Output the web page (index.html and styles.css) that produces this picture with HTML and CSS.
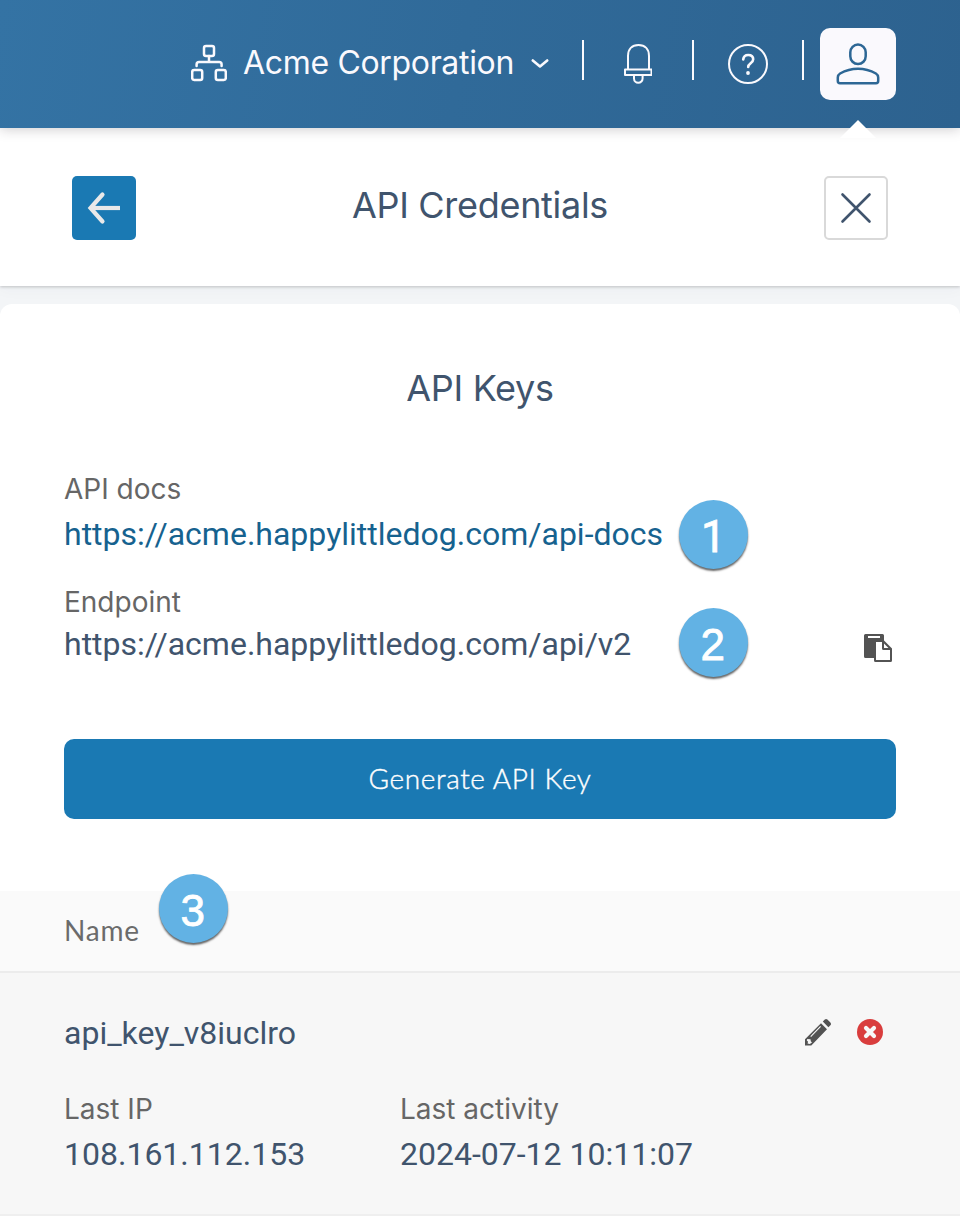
FILE: index.html
```html
<!DOCTYPE html>
<html lang="en">
<head>
<meta charset="utf-8">
<title>API Credentials</title>
<link rel="stylesheet" href="styles.css">
</head>
<body>
<header class="topbar">
  <div class="org">
    <svg class="org-icon" width="36" height="38" viewBox="0 0 36 38" fill="none" stroke="currentColor" stroke-width="2.5" stroke-linecap="round" stroke-linejoin="round">
      <rect x="13" y="2" width="10" height="10" rx="2"/>
      <rect x="1.2" y="26" width="10" height="10" rx="2"/>
      <rect x="24.8" y="26" width="10" height="10" rx="2"/>
      <path d="M18 12v6M5.600 22v-1.500q0-2.500 2.500-2.500h20q2.500 0 2.500 2.500V22"/>
    </svg>
    <span class="org-name">Acme Corporation</span>
    <svg class="chevron" width="18" height="12" viewBox="0 0 18 12" fill="none" stroke="currentColor" stroke-width="2.6" stroke-linecap="round" stroke-linejoin="round"><path d="M1.800 2.500 9 8.500l7.200-6"/></svg>
  </div>
  <span class="divider"></span>
  <span class="tool">
    <svg width="28" height="42" viewBox="0 0 28 42" fill="none" stroke="currentColor" stroke-width="2" stroke-linejoin="round">
      <path d="M4 27V14C4 7 8 3 14.500 3S25 7 25 14v13M1 27.500h26.500v5.500H1zM10 33v3.500a4.300 4.300 0 0 0 8.600 0V33"/>
    </svg>
  </span>
  <span class="divider"></span>
  <span class="tool">
    <svg width="40" height="42" viewBox="0 0 40 42" fill="none" stroke="currentColor" stroke-linecap="round" stroke-linejoin="round">
      <circle cx="20" cy="22" r="19" stroke-width="2"/>
      <path stroke-width="2.600" d="M15.200 17.500q.5-4.500 5-4.500 5 0 5 4.300c0 4-5 4-5 7.700"/>
      <circle cx="20" cy="31" r="1.900" fill="currentColor" stroke="none"/>
    </svg>
  </span>
  <span class="divider"></span>
  <span class="user">
    <svg width="44" height="44" viewBox="0 0 44 44" fill="none" stroke="currentColor" stroke-width="2.500" stroke-linejoin="round">
      <rect x="14.300" y="2.600" width="15.400" height="19.400" rx="7.700"/>
      <path d="M4 41.200h36q2.200 0 2.200-2.200v-3.500q0-2.500-2.300-4C34 28.200 28 26.800 22 26.800S10 28.200 4.100 31.500q-2.300 1.500-2.300 4V39q0 2.200 2.200 2.200z"/>
    </svg>
    <span class="pointer"></span>
  </span>
</header>

<section class="titlebar">
  <span class="square back">
    <svg width="36" height="36" viewBox="0 0 36 36" fill="none" stroke="currentColor" stroke-width="4.200"><path stroke-linecap="round" d="M16.500 4.500 4.500 18l12 13.500"/><path d="M4 18h30"/></svg>
  </span>
  <h1 class="title">API Credentials</h1>
  <span class="square close">
    <svg width="32" height="32" viewBox="0 0 32 32" fill="none" stroke="currentColor" stroke-width="2.600" stroke-linecap="round"><path d="m2.500 2.500 27 27M29.500 2.500l-27 27"/></svg>
  </span>
</section>

<main class="card">
  <h2 class="heading">API Keys</h2>
  <div class="fields">
    <div class="field docs">
      <div class="label">API docs</div>
      <div class="line"><a class="value link">https://acme.happylittledog.com/api-docs</a></div>
      <span class="badge badge-one">1</span>
    </div>
    <div class="field endpoint">
      <div class="label">Endpoint</div>
      <div class="line"><span class="value">https://acme.happylittledog.com/api/v2</span>
        <svg class="copy" width="28" height="28" viewBox="0 0 28 28">
          <path fill="#535353" fill-rule="evenodd" d="M1.500 0h17Q20 0 20 1.500V6.500l8 8V26.500Q28 28 26.500 28h-15Q10 28 10 26.500V24H1.500Q0 24 0 22.500v-21Q0 0 1.500 0zM4 2v2h12V2zM12 8v18h14V16h-6.500Q18 16 18 14.500V8zM20 9.500V14h4.500z"/>
        </svg>
      </div>
      <span class="badge badge-two">2</span>
    </div>
  </div>
  <div class="button">Generate API Key</div>
  <div class="table-head"><span class="column">Name</span><span class="badge badge-three">3</span></div>
  <div class="row">
    <div class="key-line">
      <span class="value">api_key_v8iuclro</span>
      <span class="actions">
        <svg width="28" height="28" viewBox="0 0 28 28">
          <path fill="#535353" fill-rule="evenodd" d="m18.800 2.500 2-2q1.300-1 2.600 0l3 3.100q1.200 1.300 0 2.600l-2 2zM17 4.200l6 6L7.300 26.500H1v-6.200zM16.200 7 6.300 17.200l.8.8L17 7.800zM3.300 20l-.5 1.500 1.300 1.200L3.500 24.500 5.800 25 8 23.500l-1.200-1.300-.3-1.900z"/>
        </svg>
        <svg width="26" height="26" viewBox="0 0 26 26">
          <circle cx="13" cy="13" r="13" fill="#d93d3d"/>
          <path d="m9 9 8 8m0-8-8 8" stroke="#f7f7f7" stroke-width="4.200" stroke-linecap="round"/>
        </svg>
      </span>
    </div>
    <div class="details">
      <div><div class="label">Last IP</div><div class="value">108.161.112.153</div></div>
      <div><div class="label">Last activity</div><div class="value">2024-07-12 10:11:07</div></div>
    </div>
  </div>
</main>
</body>
</html>
```
FILE: styles.css
```css
* { box-sizing: border-box; }
body {
  margin: 0;
  width: 960px;
  height: 1218px;
  overflow: hidden;
  background: #f3f5f7;
  color: #40546d;
  font-family: Inter, sans-serif;
}
svg { display: block; flex: none; }
h1, h2 { margin: 0; font-weight: 400; letter-spacing: -.3px; }

.topbar {
  position: relative;
  z-index: 2;
  display: flex;
  align-items: center;
  justify-content: flex-end;
  height: 128px;
  padding-right: 64px;
  background: linear-gradient(100deg, #3473a4 0%, #306a99 48%, #2d628f 100%);
  box-shadow: 0 1px 12px rgba(35, 25, 35, .23);
  color: #faf9fd;
}
.org { display: flex; align-items: center; margin: -2px 33px 0 0; }
.org-name {
  width: 271px;
  margin: 0 17px 0 16px;
  font-size: 32px;
  line-height: 40px;
  letter-spacing: -.33px;
  white-space: nowrap;
}
.chevron { margin-top: 1px; }
.divider { width: 2px; height: 40px; margin-top: -8px; background: #faf9fd; }
.tool { display: flex; justify-content: center; width: 108px; margin-top: -2px; }
.user {
  position: relative;
  display: flex;
  align-items: center;
  justify-content: center;
  width: 76px;
  height: 72px;
  margin-left: 16px;
  border-radius: 10px;
  background: #faf9fd;
  color: #2d6795;
}
.pointer {
  position: absolute;
  top: 92px;
  left: 20px;
  width: 36px;
  height: 18px;
  background: #fff;
  clip-path: polygon(50% 0, 100% 100%, 0 100%);
}

.titlebar {
  display: flex;
  align-items: center;
  justify-content: space-between;
  height: 158px;
  padding: 2px 72px 0;
  background: #fff;
  box-shadow: 0 1px 3px rgba(0, 0, 0, .2), 0 4px 14px rgba(30, 60, 90, .03);
}
.square {
  display: flex;
  align-items: center;
  justify-content: center;
  width: 64px;
  height: 64px;
  border-radius: 5px;
}
.back { background: #1a79b3; color: #e9e9e9; }
.close { border: 2px solid #d9d9d9; }
.title { margin-top: -7px; font-size: 36px; line-height: 44px; }

.card {
  height: 914px;
  margin-top: 18px;
  border-radius: 12px 12px 0 0;
  background: #fff;
}
.heading {
  height: 168px;
  padding-top: 62px;
  font-size: 36px;
  line-height: 44px;
  text-align: center;
}
.fields { padding: 0 64px; }
.field { position: relative; }
.docs { height: 113px; }
.endpoint { height: 88px; }
.label { color: #666; font-size: 28px; line-height: 34px; }
.line { display: flex; align-items: center; justify-content: space-between; height: 56px; }
.endpoint .line { height: 50px; }
.value { font-family: Roboto, sans-serif; font-size: 32px; line-height: 40px; white-space: nowrap; }
.link { color: #16628f; }
.copy { margin: 8px 4px 0 0; }
.badge {
  position: absolute;
  width: 69px;
  height: 69px;
  border-radius: 50%;
  background: #62b2e4;
  box-shadow: 0 2px 2px rgba(0, 0, 0, .6);
  color: #fff;
  font: 400 44px/74px "Liberation Sans", Arial, sans-serif;
  text-align: center;
  -webkit-text-stroke: .8px #fff;
}
.badge-one { left: 615.3px; top: 28px; padding-right: 1px; font-family: Roboto, sans-serif; }
.badge-two { left: 615.3px; top: 23px; padding-right: 2px; }
.badge-three { left: 159.3px; top: -17px; padding-right: 2px; }
.button {
  height: 80px;
  margin: 66px 64px 72px;
  border-radius: 10px;
  background: #1a79b3;
  color: #fff;
  font: 300 28px/78px Lato, sans-serif;
  letter-spacing: .6px;
  text-align: center;
  -webkit-text-stroke: .4px #fff;
}
.table-head {
  position: relative;
  height: 82px;
  padding-left: 64px;
  border-bottom: 2px solid #ececec;
  background: #fafafa;
}
.column { color: #6b6b6b; font: 400 28px/78px Lato, sans-serif; letter-spacing: .8px; }
.row { height: 243px; padding: 40px 64px 0; border-bottom: 2px solid #efefef; background: #f7f7f7; }
.key-line { display: flex; align-items: center; justify-content: space-between; height: 40px; }
.actions { display: flex; gap: 25px; margin-right: 13px; }
.details { display: grid; grid-template-columns: 336px 1fr; margin-top: 39px; }
.details .value { margin-top: 8px; }
```
